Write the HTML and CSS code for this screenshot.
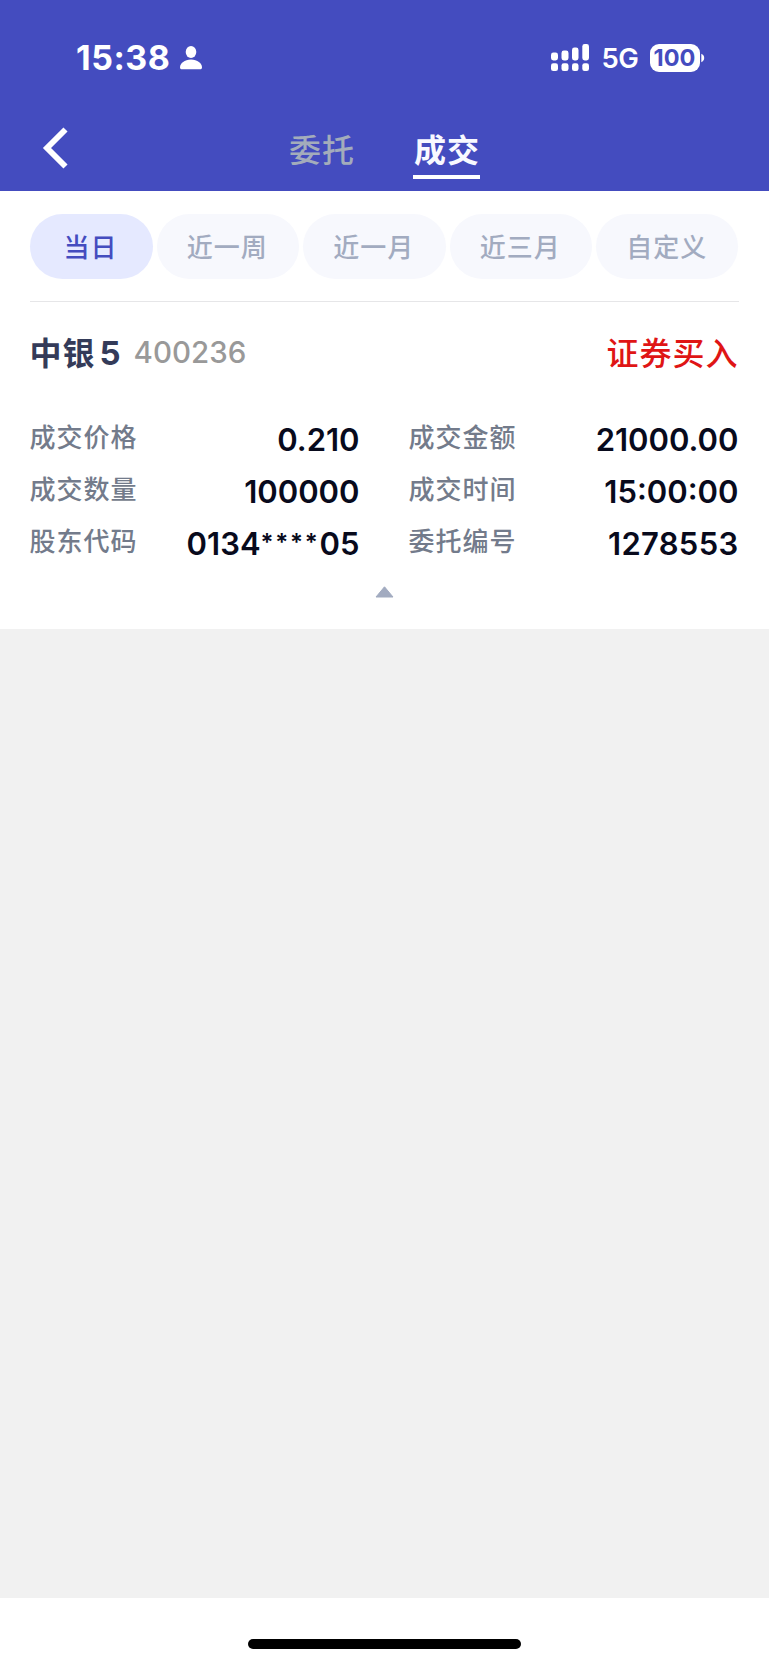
FILE: index.html
```html
<!DOCTYPE html>
<html lang="zh-CN">
<head>
<meta charset="utf-8">
<title>成交</title>
<link rel="stylesheet" href="styles.css">
</head>
<body>
<div class="screen">
  <header class="header">
    <div class="status">
      <span class="clock">15:38</span>
      <svg class="person" width="24" height="26" viewBox="0 0 24 26"><ellipse cx="12" cy="7" rx="5.3" ry="6"/><path d="M1 22.4C1 18.5 5.6 14.6 12 14.6s11 3.9 11 7.8c0 1.3-.9 1.9-2.2 1.9H3.2C1.900 24.300 1 23.700 1 22.400z"/></svg>
      <svg class="signal" width="39" height="28" viewBox="0 0 39 28">
        <rect x="0" y="8.500" width="7" height="8" rx="2.400"/><rect x="10.500" y="6.500" width="7" height="10" rx="2.400"/><rect x="21" y="3.500" width="6.500" height="13" rx="2.400"/><rect x="31.300" y="0" width="6.700" height="16.500" rx="2.400"/>
        <rect x="0" y="19.300" width="7" height="7.700" rx="2.300"/><rect x="10.500" y="19.300" width="7" height="7.700" rx="2.300"/><rect x="21" y="19.300" width="6.500" height="7.700" rx="2.300"/><rect x="31.300" y="19.300" width="6.700" height="7.700" rx="2.300"/>
      </svg>
      <span class="network">5G</span>
      <span class="battery">100</span>
      <svg class="nub" width="4" height="10" viewBox="0 0 4 10"><path d="M.3.800C2 1.500 3.200 3 3.200 5S2 8.500.3 9.200z"/></svg>
    </div>
    <nav class="nav">
      <svg class="back" width="26" height="42" viewBox="0 0 26 42"><path d="M23.500 2.500L5 21 23.500 39.500" fill="none" stroke="#fff" stroke-width="5.800"/></svg>
      <span class="tab">委托</span>
      <span class="tab tab-active">成交</span>
    </nav>
  </header>
  <main class="panel">
    <div class="filters">
      <span class="pill pill-active">当日</span>
      <span class="pill">近一周</span>
      <span class="pill">近一月</span>
      <span class="pill">近三月</span>
      <span class="pill">自定义</span>
    </div>
    <section class="trade">
      <div class="trade-head">
        <span class="name">中银<span class="name-num">5</span></span>
        <span class="code">400236</span>
        <span class="side">证券买入</span>
      </div>
      <dl class="details">
        <div class="row"><dt>成交价格</dt><dd>0.210</dd></div>
        <div class="row"><dt>成交金额</dt><dd>21000.00</dd></div>
        <div class="row"><dt>成交数量</dt><dd>100000</dd></div>
        <div class="row"><dt>成交时间</dt><dd>15:00:00</dd></div>
        <div class="row"><dt>股东代码</dt><dd>0134<span class="mask">****</span>05</dd></div>
        <div class="row"><dt>委托编号</dt><dd class="wide">1278553</dd></div>
      </dl>
      <svg class="collapse" width="19" height="12" viewBox="0 0 19 12"><path d="M9.500 .8L18 11H1z" fill="#a2abc0" stroke="#a2abc0" stroke-linejoin="round"/></svg>
    </section>
  </main>
  <footer class="footer"><div class="home-bar"></div></footer>
</div>
</body>
</html>
```
FILE: styles.css
```css
* { box-sizing: border-box; }
body { margin: 0; font-family: Inter, "Noto Sans CJK SC", sans-serif; }
.screen {
  width: 769px;
  height: 1665px;
  display: flex;
  flex-direction: column;
  background: #f1f1f1;
}
.header { height: 191px; background: #444cbf; color: #fff; }
.status {
  height: 115px;
  padding: 0 64.500px 0 76px;
  display: flex;
  align-items: center;
  fill: #fff;
}
.clock { font-size: 34px; font-weight: 700; line-height: 40px; letter-spacing: 0.500px; }
.person { margin-left: 9px; }
.signal { margin-left: auto; }
.network { margin-left: 11.500px; width: 37px; font-size: 27.500px; font-weight: 600; line-height: 34px; letter-spacing: -0.500px; white-space: nowrap; margin-top: 1px; }
.battery {
  margin-left: 11px;
  width: 50px;
  height: 28px;
  border-radius: 9px;
  background: #fff;
  color: #444cbf;
  font-size: 23.500px;
  font-weight: 700;
  line-height: 28px;
  text-align: center;
}
.nub { margin-left: 1px; }
.nav { height: 76px; display: flex; padding-left: 42px; }
.back { margin: 12px 221px 0 0; }
.tab {
  width: 67px;
  height: 64px;
  padding-top: 12px;
  font-size: 32px;
  line-height: 48px;
  letter-spacing: 1px;
  font-weight: 500;
  color: #a3acbb;
  white-space: nowrap;
}
.tab-active { margin-left: 57px; border-bottom: 4px solid #fff; color: #f8f9ff; font-weight: 700; padding-left: 1px; }
.panel { height: 438px; padding: 23px 30.500px 0 29.500px; background: #fff; }
.filters { height: 88px; display: flex; gap: 4px; border-bottom: 1px solid #e6e6e8; }
.pill {
  flex: 142.600 0 0;
  height: 65px;
  border-radius: 33px;
  background: #f7f8fd;
  color: #a2abc0;
  font-size: 26px;
  letter-spacing: 1px;
  font-weight: 500;
  line-height: 67px;
  padding-right: 1px;
  text-align: center;
}
.pill-active { flex-grow: 123; background: #e5e9ff; color: #444cbf; }
.trade { display: flex; flex-direction: column; }
.trade-head { height: 110px; padding-top: 28px; display: flex; line-height: 48px; white-space: nowrap; }
.name { font-size: 32px; font-weight: 700; letter-spacing: 1px; color: #343b59; }
.name-num { margin-left: 4px; font-size: 33px; line-height: 1; }
.code { margin-left: 12px; font-size: 29.500px; font-weight: 500; line-height: 45px; color: #999; }
.side { margin-left: auto; font-size: 32px; letter-spacing: 1px; font-weight: 500; color: #df1515; }
.details {
  margin: 0;
  display: grid;
  grid-template-columns: 330px 330px;
  grid-auto-rows: 52.200px;
  column-gap: 49px;
}
.row { display: flex; justify-content: space-between; white-space: nowrap; }
.row dt { font-size: 26px; letter-spacing: 1px; line-height: 52px; color: #737b8b; font-weight: 500; }
.row dd { margin: 0; font-size: 31px; line-height: 55px; font-weight: 600; color: #080a1c; }
.row .wide { letter-spacing: 0.300px; }
.mask { font-size: 24px; line-height: 1; letter-spacing: 1.800px; vertical-align: 4.500px; }
.collapse { margin: 17px auto 0; }
.footer { height: 67px; margin-top: auto; padding-top: 41px; background: #fff; }
.home-bar { width: 273px; height: 10px; margin: 0 auto; border-radius: 5px; background: #000; }
```
